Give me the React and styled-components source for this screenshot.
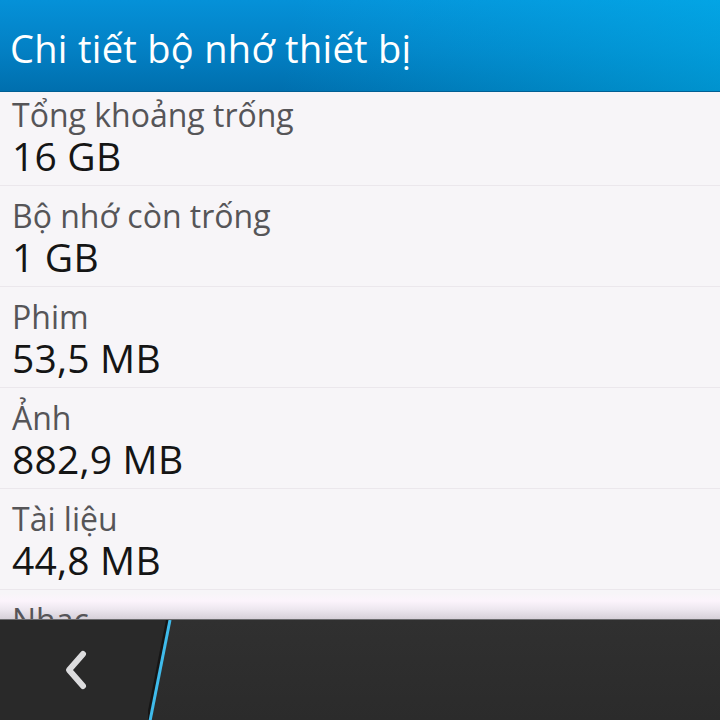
import React from 'react';
import styled, { createGlobalStyle } from 'styled-components';

const items = [
	{ label: 'Tổng khoảng trống', value: '16 GB' },
	{ label: 'Bộ nhớ còn trống', value: '1 GB' },
	{ label: 'Phim', value: '53,5 MB' },
	{ label: 'Ảnh', value: '882,9 MB' },
	{ label: 'Tài liệu', value: '44,8 MB' },
	{ label: 'Nhạc', value: '12,1 MB' },
];

const App = () => {
	return (
		<>
			<GlobalStyle />
			<Screen>
				<TitleBar>
					<Title>Chi tiết bộ nhớ thiết bị</Title>
				</TitleBar>
				<ListArea>
					<BottomShade />
					<List>
						{items.map((item) => (
							<Row key={item.label}>
								<Label>{item.label}</Label>
								<Value>{item.value}</Value>
							</Row>
						))}
					</List>
				</ListArea>
				<ActionBar>
					<BackButton aria-label='Back'>
						<svg width='30' height='44' viewBox='0 0 30 44'>
							<path
								d='M22 6 L8 22 L22 38'
								fill='none'
								stroke='#dcdcde'
								strokeWidth='6'
								strokeLinecap='round'
								strokeLinejoin='round'
							/>
						</svg>
					</BackButton>
					<Slash width='30' height='101' viewBox='0 0 30 101'>
						<line x1='20' y1='0' x2='0' y2='101' stroke='#151515' strokeWidth='4' />
						<line x1='22' y1='0' x2='2' y2='101' stroke='#3fbbeb' strokeWidth='3' />
					</Slash>
				</ActionBar>
			</Screen>
		</>
	);
};

export default App;

const GlobalStyle = createGlobalStyle`
	html, body {
		margin: 0;
		padding: 0;
		background: #f7f5f8;
	}
`;

const Screen = styled.div`
	width: 720px;
	height: 720px;
	display: flex;
	flex-direction: column;
	overflow: hidden;
	font-family: 'Open Sans', 'Noto Sans', sans-serif;
`;

const TitleBar = styled.header`
	position: relative;
	z-index: 2;
	height: 92px;
	flex-shrink: 0;
	display: flex;
	align-items: center;
	padding: 5px 10px 0;
	box-sizing: border-box;
	border-bottom: 1px solid #005f94;
	background:
		linear-gradient(100deg, rgba(0, 0, 0, 0) 40%, rgba(0, 190, 245, 0.45) 100%),
		linear-gradient(to bottom, #0591d8 0%, #0380c4 55%, #006fae 100%);
`;

const Title = styled.h1`
	margin: 0;
	color: #ffffff;
	font-family: 'Open Sans', sans-serif;
	font-weight: 400;
	font-size: 38px;
	letter-spacing: 0.3px;
	line-height: 38px;
`;

const ListArea = styled.div`
	position: relative;
	flex: 1;
	overflow: hidden;
	background: #f7f5f8;
`;

const List = styled.div`
	position: relative;
	z-index: 1;
	display: flex;
	flex-direction: column;
	margin-top: -7px;
`;

const Row = styled.div`
	height: 101px;
	flex-shrink: 0;
	box-sizing: border-box;
	padding: 10px 12px 0;
	border-bottom: 1px solid #ebe7ec;
	display: flex;
	flex-direction: column;
`;

const Label = styled.div`
	color: #565558;
	font-size: 32px;
	line-height: 40px;
`;

const Value = styled.div`
	color: #151515;
	font-size: 39px;
	line-height: 42px;
	letter-spacing: 0.2px;
`;

const BottomShade = styled.div`
	position: absolute;
	left: 0;
	right: 0;
	bottom: 0;
	height: 26px;
	background: linear-gradient(
		to bottom,
		rgba(247, 245, 248, 0) 0%,
		rgba(252, 244, 252, 1) 30%,
		rgba(236, 230, 238, 1) 65%,
		rgba(214, 208, 216, 1) 100%
	);
`;

const ActionBar = styled.nav`
	position: relative;
	height: 101px;
	flex-shrink: 0;
	box-sizing: border-box;
	border-top: 1px solid #6b6b6d;
	background: linear-gradient(to bottom, #303030 0%, #2b2b2b 100%);
	display: flex;
	align-items: center;
`;

const BackButton = styled.button`
	width: 170px;
	height: 100%;
	border: none;
	background: #292929;
	display: flex;
	align-items: center;
	padding: 0 0 0 61px;
	box-sizing: border-box;
	clip-path: polygon(0 0, 169px 0, 149px 100%, 0 100%);
`;

const Slash = styled.svg`
	position: absolute;
	left: 148px;
	top: 0;
`;
